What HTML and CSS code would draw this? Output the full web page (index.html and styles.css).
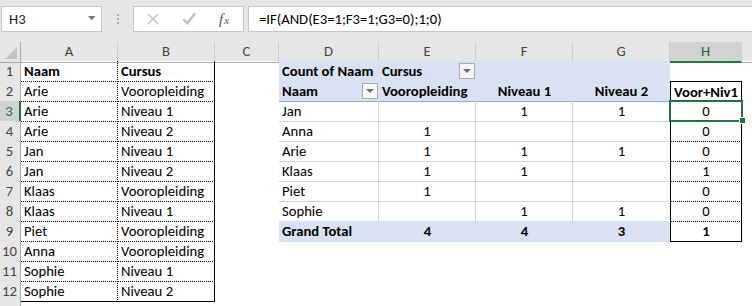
FILE: index.html
```html
<!DOCTYPE html>
<html lang="nl">
<head>
<meta charset="utf-8">
<title>Draaitabel – Cursus</title>
<link rel="stylesheet" href="styles.css">
</head>
<body>
<div class="app">
  <div class="formula-bar">
    <div class="name-box">
      <span class="name-box__ref">H3</span>
      <svg class="name-box__arrow" width="8" height="5" viewBox="0 0 8 5"><path d="M0 0h7.5L3.75 4.2z" fill="#7a7a7a"/></svg>
    </div>
    <div class="grip"><i></i><i></i><i></i></div>
    <div class="fx-box">
      <svg class="fx-box__icon" width="12" height="12" viewBox="0 0 12 12"><path d="M1 1l10 10M11 1L1 11" stroke="#bfbfbf" stroke-width="1.3" fill="none"/></svg>
      <svg class="fx-box__icon" width="14" height="13" viewBox="0 0 14 13"><path d="M1.2 7.2l4 4 7.8-9.6" stroke="#bfbfbf" stroke-width="2.3" fill="none"/></svg>
      <span class="fx-box__fx">f<span class="fx-box__x">x</span></span>
    </div>
    <div class="formula-input">=IF(AND(E3=1;F3=1;G3=0);1;0)</div>
  </div>

  <div class="sheet">
    <div class="row row--heads">
      <div class="corner"><span class="corner__tri"></span></div>
      <div class="ch">A</div><div class="ch">B</div><div class="ch">C</div><div class="ch">D</div>
      <div class="ch">E</div><div class="ch">F</div><div class="ch">G</div><div class="ch ch--sel">H</div><div class="ch ch--rest"></div>
    </div>

    <div class="row">
      <div class="rh">1</div>
      <div class="c dt-a b">Naam</div><div class="c dt-b b">Cursus</div><div class="c"></div>
      <div class="c pv-h b">Count of Naam</div>
      <div class="c pv-h b flt"><span>Cursus</span><span class="flt-btn"></span></div>
      <div class="c pv-h"></div><div class="c pv-h"></div>
      <div class="c"></div><div class="c"></div>
    </div>

    <div class="row">
      <div class="rh">2</div>
      <div class="c dt-a">Arie</div><div class="c dt-b">Vooropleiding</div><div class="c"></div>
      <div class="c pv-h pv-h2 b flt"><span>Naam</span><span class="flt-btn"></span></div>
      <div class="c pv-h pv-h2 b">Vooropleiding</div>
      <div class="c pv-h pv-h2 b ctr">Niveau 1</div>
      <div class="c pv-h pv-h2 b ctr">Niveau 2</div>
      <div class="c hx hx-top b ctr">Voor+Niv1</div><div class="c"></div>
    </div>

    <div class="row">
      <div class="rh rh--sel">3</div>
      <div class="c dt-a">Arie</div><div class="c dt-b">Niveau 1</div><div class="c"></div>
      <div class="c pv-d pv-v">Jan</div><div class="c pv-d pv-v ctr"></div><div class="c pv-d pv-v ctr">1</div><div class="c pv-d ctr">1</div>
      <div class="c hx ctr">0</div><div class="c"></div>
    </div>

    <div class="row">
      <div class="rh">4</div>
      <div class="c dt-a">Arie</div><div class="c dt-b">Niveau 2</div><div class="c"></div>
      <div class="c pv-d pv-v">Anna</div><div class="c pv-d pv-v ctr">1</div><div class="c pv-d pv-v ctr"></div><div class="c pv-d ctr"></div>
      <div class="c hx ctr">0</div><div class="c"></div>
    </div>

    <div class="row">
      <div class="rh">5</div>
      <div class="c dt-a">Jan</div><div class="c dt-b">Niveau 1</div><div class="c"></div>
      <div class="c pv-d pv-v">Arie</div><div class="c pv-d pv-v ctr">1</div><div class="c pv-d pv-v ctr">1</div><div class="c pv-d ctr">1</div>
      <div class="c hx ctr">0</div><div class="c"></div>
    </div>

    <div class="row">
      <div class="rh">6</div>
      <div class="c dt-a">Jan</div><div class="c dt-b">Niveau 2</div><div class="c"></div>
      <div class="c pv-d pv-v">Klaas</div><div class="c pv-d pv-v ctr">1</div><div class="c pv-d pv-v ctr">1</div><div class="c pv-d ctr"></div>
      <div class="c hx ctr">1</div><div class="c"></div>
    </div>

    <div class="row">
      <div class="rh">7</div>
      <div class="c dt-a">Klaas</div><div class="c dt-b">Vooropleiding</div><div class="c"></div>
      <div class="c pv-d pv-v">Piet</div><div class="c pv-d pv-v ctr">1</div><div class="c pv-d pv-v ctr"></div><div class="c pv-d ctr"></div>
      <div class="c hx ctr">0</div><div class="c"></div>
    </div>

    <div class="row">
      <div class="rh">8</div>
      <div class="c dt-a">Klaas</div><div class="c dt-b">Niveau 1</div><div class="c"></div>
      <div class="c pv-last pv-v">Sophie</div><div class="c pv-last pv-v ctr"></div><div class="c pv-last pv-v ctr">1</div><div class="c pv-last ctr">1</div>
      <div class="c hx ctr">0</div><div class="c"></div>
    </div>

    <div class="row">
      <div class="rh">9</div>
      <div class="c dt-a">Piet</div><div class="c dt-b">Vooropleiding</div><div class="c"></div>
      <div class="c pv-t b">Grand Total</div><div class="c pv-t b ctr">4</div><div class="c pv-t b ctr">4</div><div class="c pv-t b ctr">3</div>
      <div class="c hx hx-end b ctr">1</div><div class="c"></div>
    </div>

    <div class="row">
      <div class="rh">10</div>
      <div class="c dt-a">Anna</div><div class="c dt-b">Vooropleiding</div>
      <div class="c"></div><div class="c"></div><div class="c"></div><div class="c"></div><div class="c"></div><div class="c"></div><div class="c"></div>
    </div>

    <div class="row">
      <div class="rh">11</div>
      <div class="c dt-a">Sophie</div><div class="c dt-b">Niveau 1</div>
      <div class="c"></div><div class="c"></div><div class="c"></div><div class="c"></div><div class="c"></div><div class="c"></div><div class="c"></div>
    </div>

    <div class="row">
      <div class="rh">12</div>
      <div class="c dt-a dt-end">Sophie</div><div class="c dt-b dt-end">Niveau 2</div>
      <div class="c"></div><div class="c"></div><div class="c"></div><div class="c"></div><div class="c"></div><div class="c"></div><div class="c"></div>
    </div>

    <!-- next row, only its top edge fits in the window -->
    <div class="row">
      <div class="rh"></div>
      <div class="c"></div><div class="c"></div><div class="c"></div><div class="c"></div><div class="c"></div>
      <div class="c"></div><div class="c"></div><div class="c"></div><div class="c"></div>
    </div>

    <!-- active cell H3 with its fill handle -->
    <div class="selection"><span class="selection__handle"></span></div>
  </div>
</div>
</body>
</html>
```
FILE: styles.css
```css
* { box-sizing: border-box; }

html, body {
  margin: 0;
  padding: 0;
  background: #ffffff;
}

body {
  font-family: Carlito, Lato, "Liberation Sans", sans-serif;
  font-size: 14.67px;
  color: #000;
  overflow: hidden;
}

.app {
  width: 752px;
  height: 306px;
  overflow: hidden;
}

/* ---------- formula bar ---------- */
.formula-bar {
  height: 42px;
  background: #e6e6e6;
  display: flex;
  align-items: flex-start;
  padding-top: 6px;
  padding-left: 1px;
}

.name-box {
  width: 101px;
  height: 26px;
  background: #fff;
  border: 1px solid #c6c6c6;
  display: flex;
  align-items: center;
  justify-content: space-between;
  padding: 0 5px 0 7px;
}

.name-box__ref {
  line-height: 24px;
  color: #222;
}

.name-box__arrow { display: block; margin-top: -2px; }

.grip {
  width: 31px;
  height: 26px;
  display: flex;
  flex-direction: column;
  align-items: center;
  justify-content: center;
  gap: 2px;
}

.grip i {
  display: block;
  width: 2px;
  height: 2px;
  background: #a6a6a6;
}

.fx-box {
  width: 111px;
  height: 26px;
  background: #fff;
  border: 1px solid #c6c6c6;
  display: flex;
  align-items: center;
  padding-left: 13px;
}

.fx-box__icon { display: block; }
.fx-box__icon + .fx-box__icon { margin-left: 23px; margin-top: -1px; }

.fx-box__fx {
  margin-left: 23px;
  font-family: "Liberation Serif", serif;
  font-style: italic;
  font-size: 15px;
  color: #5a5a5a;
  line-height: 1;
}

.fx-box__x {
  font-size: 11px;
  margin-left: 1px;
}

.formula-input {
  flex: 1;
  height: 26px;
  margin-left: 4px;
  margin-right: -4px;
  background: #fff;
  border: 1px solid #c6c6c6;
  border-right: 0;
  padding-left: 10px;
  line-height: 24px;
  white-space: nowrap;
}

/* ---------- sheet grid ---------- */
.sheet {
  position: relative;
  --cols: 21px 97px 97px 64px 100px 97px 97px 97px 72px 1fr;
}

.row {
  display: grid;
  grid-template-columns: var(--cols);
  height: 20px;
}

.row--heads {
  height: 19px;
  background: #e6e6e6;
}

.corner {
  position: relative;
  border-right: 1px solid #ababab;
  border-bottom: 1px solid #ababab;
}

.corner__tri {
  position: absolute;
  right: 3px;
  bottom: 3px;
  width: 0;
  height: 0;
  border-left: 12px solid transparent;
  border-bottom: 12px solid #c3c3c3;
}

.ch {
  border-right: 1px solid #cdcdcd;
  border-bottom: 1px solid #ababab;
  text-align: center;
  line-height: 19px;
  color: #444;
}

.ch--sel {
  background: #d2d2d2;
  border-bottom: 2px solid #217346;
  color: #1d5b38;
}

.ch--rest { border-right: 0; }

.rh {
  background: #e6e6e6;
  border-right: 1px solid #ababab;
  border-bottom: 1px solid #d0d0d0;
  text-align: center;
  padding-right: 1px;
  line-height: 19px;
  padding-top: 1px;
  color: #444;
}

.rh--sel {
  background: #d2d2d2;
  border-right: 2px solid #217346;
  color: #217346;
}

.c {
  line-height: 19px;
  padding: 1px 3px 0 3px;
  white-space: nowrap;
  overflow: hidden;
}

.b { font-weight: 700; }
.ctr { text-align: center; }

/* source table A1:B12 */
.dt-a {
  border-right: 1px dotted #000;
  border-bottom: 1px dotted #000;
}

.dt-b {
  border-right: 1px solid #000;
  border-bottom: 1px dotted #000;
}

.dt-end { border-bottom: 1px solid #000; }

/* pivot table D1:G9 */
.pv-h { background: #d9e1f2; }
.pv-h2 { border-bottom: 1px solid #8ea9db; }

.pv-d { border-bottom: 1px solid #d4d4d4; }
.pv-v { border-right: 1px solid #d4d4d4; }
.pv-last { border-bottom: 1px solid #8ea9db; }
.pv-t { background: #d9e1f2; }

.flt {
  display: flex;
  justify-content: space-between;
  align-items: flex-start;
  padding-right: 1px;
}

.flt-btn {
  position: relative;
  flex: none;
  width: 16px;
  height: 16px;
  margin-top: 1px;
  background: #f7f7f7;
  border: 1px solid #a9a9a9;
}

.flt-btn::after {
  content: "";
  position: absolute;
  left: 3px;
  top: 5px;
  border-left: 4px solid transparent;
  border-right: 4px solid transparent;
  border-top: 4px solid #6e6e6e;
}

/* helper column H2:H9 */
.hx {
  border-left: 1px solid #000;
  border-right: 1px solid #000;
  border-bottom: 1px dotted #000;
}

.hx-top { border-top: 1px solid #000; line-height: 18px; }
.hx-end { border-bottom: 1px solid #000; }

/* active cell */
.selection {
  position: absolute;
  left: 669px;
  top: 58px;
  width: 74px;
  height: 22px;
  border: 2px solid #217346;
}

.selection__handle {
  position: absolute;
  right: -5px;
  bottom: -4px;
  width: 7px;
  height: 7px;
  background: #217346;
  border: 1px solid #fff;
}
```
